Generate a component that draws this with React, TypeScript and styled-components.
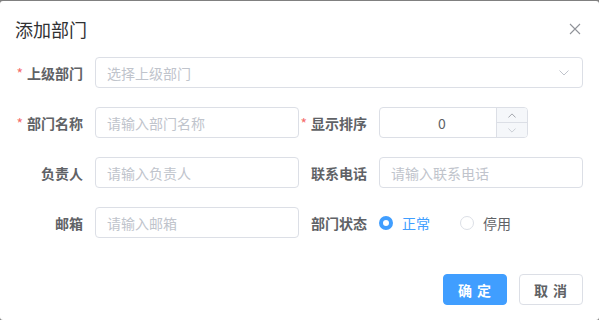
import React, { useState } from 'react';
import styled, { createGlobalStyle } from 'styled-components';

const GlobalStyle = createGlobalStyle`
  html, body {
    margin: 0;
    padding: 0;
    background: #808080;
    font-family: "Noto Sans CJK SC", "Noto Sans", "Liberation Sans", sans-serif;
  }
  * { box-sizing: border-box; }
`;

const Dialog = styled.div`
  margin-top: 1px;
  width: 599px;
  height: 319px;
  background: #fff;
  border-radius: 3px;
  display: flex;
  flex-direction: column;
`;

const Header = styled.div`
  display: flex;
  align-items: center;
  justify-content: space-between;
  padding: 15px 18px 0 15px;
  height: 41px;
`;

const Title = styled.span`
  font-size: 18px;
  line-height: 24px;
  color: #303133;
`;

const CloseButton = styled.button`
  border: none;
  background: none;
  padding: 0;
  width: 12px;
  height: 12px;
  display: flex;
  cursor: pointer;
`;

const Form = styled.div`
  padding: 15px 16px 0 15px;
  display: flex;
  flex-direction: column;
  gap: 19px;
`;

const Row = styled.div`
  display: flex;
`;

const Item = styled.div<{ $full?: boolean }>`
  display: flex;
  align-items: center;
  width: ${({ $full }) => ($full ? '100%' : '284px')};
  height: 31px;
`;

const Label = styled.label`
  width: 80px;
  flex-shrink: 0;
  padding-right: 12px;
  text-align: right;
  font-size: 14px;
  font-weight: 700;
  color: #606266;
  white-space: nowrap;
`;

const Star = styled.span`
  color: #f56c6c;
  margin-right: 4px;
  font-weight: 400;
`;

const Field = styled.div`
  position: relative;
  flex: 1;
  height: 31px;
  display: flex;
`;

const Input = styled.input<{ $center?: boolean }>`
  width: 100%;
  height: 31px;
  border: 1px solid #dcdfe6;
  border-radius: 4px;
  padding: 0 ${({ $center }) => ($center ? '34px' : '30px')} 0 11px;
  font-size: 14px;
  font-family: inherit;
  color: #606266;
  outline: none;
  text-align: ${({ $center }) => ($center ? 'center' : 'left')};
  &::placeholder { color: #c0c4cc; }
`;

const Suffix = styled.span`
  position: absolute;
  right: 14px;
  top: 0;
  bottom: 0;
  display: flex;
  align-items: center;
`;

const NumberBox = styled.div`
  position: relative;
  width: 149px;
  height: 31px;
  display: flex;
`;

const Stepper = styled.div`
  position: absolute;
  right: 1px;
  top: 1px;
  bottom: 1px;
  width: 31px;
  display: flex;
  flex-direction: column;
  border-left: 1px solid #dcdfe6;
  background: #f5f7fa;
  border-radius: 0 3px 3px 0;
`;

const StepButton = styled.span<{ $top?: boolean }>`
  flex: 1;
  display: flex;
  align-items: center;
  justify-content: center;
  border-bottom: ${({ $top }) => ($top ? '1px solid #dcdfe6' : 'none')};
`;

const RadioGroup = styled.div`
  display: flex;
  align-items: center;
  gap: 30px;
`;

const Radio = styled.label<{ $checked?: boolean }>`
  display: flex;
  align-items: center;
  gap: 9px;
  font-size: 14px;
  color: ${({ $checked }) => ($checked ? '#409eff' : '#606266')};
  cursor: pointer;
`;

const RadioDot = styled.span<{ $checked?: boolean }>`
  width: 14px;
  height: 14px;
  border-radius: 50%;
  border: ${({ $checked }) => ($checked ? '4px solid #409eff' : '1px solid #dcdfe6')};
  background: #fff;
`;

const Footer = styled.div`
  margin-top: auto;
  display: flex;
  justify-content: flex-end;
  gap: 12px;
  padding: 0 16px 15px 0;
`;

const Button = styled.button<{ $primary?: boolean }>`
  width: 64px;
  height: 31px;
  border-radius: 4px;
  font-family: inherit;
  font-size: 14px;
  font-weight: 700;
  letter-spacing: 1px;
  border: 1px solid ${({ $primary }) => ($primary ? '#409eff' : '#dcdfe6')};
  background: ${({ $primary }) => ($primary ? '#409eff' : '#fff')};
  color: ${({ $primary }) => ($primary ? '#fff' : '#606266')};
  cursor: pointer;
`;

const Chevron = ({ up, size = 10, color = '#c0c4cc' }: { up?: boolean; size?: number; color?: string }) => (
  <svg width={size} height={size / 2 + 1} viewBox="0 0 10 6" fill="none">
    <path d={up ? 'M0.5 5.5L5 1L9.5 5.5' : 'M0.5 0.5L5 5L9.5 0.5'} stroke={color} strokeWidth="1" />
  </svg>
);

const App: React.FC = () => {
  const [status, setStatus] = useState('0');

  return (
    <>
      <GlobalStyle />
      <Dialog>
        <Header>
          <Title>添加部门</Title>
          <CloseButton aria-label="close">
            <svg width="12" height="12" viewBox="0 0 12 12">
              <path d="M1 1L11 11M11 1L1 11" stroke="#909399" strokeWidth="1.1" />
            </svg>
          </CloseButton>
        </Header>
        <Form>
          <Row>
            <Item $full>
              <Label><Star>*</Star>上级部门</Label>
              <Field>
                <Input placeholder="选择上级部门" readOnly />
                <Suffix><Chevron /></Suffix>
              </Field>
            </Item>
          </Row>
          <Row>
            <Item>
              <Label><Star>*</Star>部门名称</Label>
              <Field><Input placeholder="请输入部门名称" /></Field>
            </Item>
            <Item>
              <Label><Star>*</Star>显示排序</Label>
              <NumberBox>
                <Input $center defaultValue="0" />
                <Stepper>
                  <StepButton $top><Chevron up size={8} color="#909399" /></StepButton>
                  <StepButton><Chevron size={8} color="#c0c4cc" /></StepButton>
                </Stepper>
              </NumberBox>
            </Item>
          </Row>
          <Row>
            <Item>
              <Label>负责人</Label>
              <Field><Input placeholder="请输入负责人" /></Field>
            </Item>
            <Item>
              <Label>联系电话</Label>
              <Field><Input placeholder="请输入联系电话" /></Field>
            </Item>
          </Row>
          <Row>
            <Item>
              <Label>邮箱</Label>
              <Field><Input placeholder="请输入邮箱" /></Field>
            </Item>
            <Item>
              <Label>部门状态</Label>
              <RadioGroup>
                <Radio $checked={status === '0'} onClick={() => setStatus('0')}>
                  <RadioDot $checked={status === '0'} />正常
                </Radio>
                <Radio $checked={status === '1'} onClick={() => setStatus('1')}>
                  <RadioDot $checked={status === '1'} />停用
                </Radio>
              </RadioGroup>
            </Item>
          </Row>
        </Form>
        <Footer>
          <Button $primary>确 定</Button>
          <Button>取 消</Button>
        </Footer>
      </Dialog>
    </>
  );
};

export default App;
